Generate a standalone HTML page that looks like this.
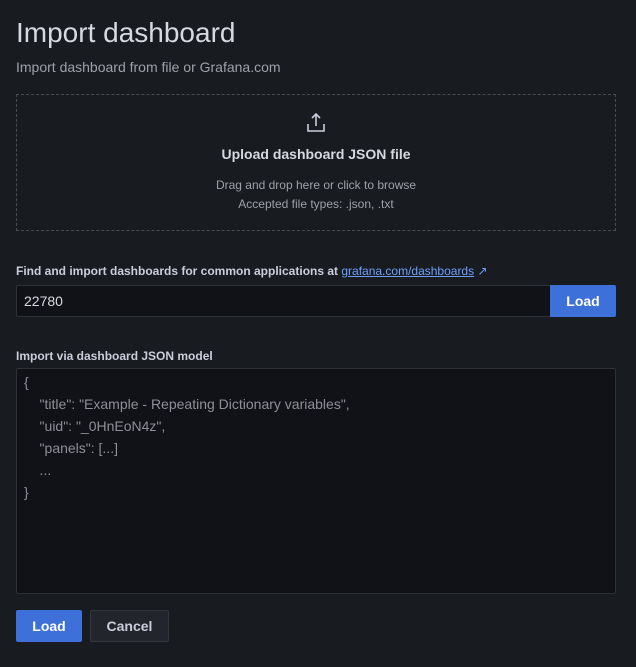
<!DOCTYPE html>
<html><head><style>
*{box-sizing:border-box;margin:0;padding:0}
body{width:636px;height:667px;background:#181b1f;font-family:"Liberation Sans",sans-serif;color:#ccccdc;position:relative;overflow:hidden}
.a{position:absolute}
</style></head><body>
<div class="a" style="left:16px;top:17px;font-size:28px;color:#d8d9e0;">Import dashboard</div>
<div class="a" style="left:16px;top:59px;font-size:14px;color:#9fa0a8;">Import dashboard from file or Grafana.com</div>
<div class="a" style="left:16px;top:94px;width:600px;height:137px;border:1px dashed #4a4c52;"></div>
<svg class="a" style="left:305px;top:112px" width="22" height="22" viewBox="0 0 22 22" fill="none" stroke="#ccccdc" stroke-width="1.6"><path d="M11 2v12M7 6l4-4 4 4M3 12v7h16v-7"/></svg>
<div class="a" style="left:0;width:632px;top:146px;text-align:center;font-size:14px;font-weight:bold;color:#d8d9e0;">Upload dashboard JSON file</div>
<div class="a" style="left:0;width:632px;top:176px;text-align:center;font-size:12px;color:#9fa0a8;line-height:19px;">Drag and drop here or click to browse<br>Accepted file types: .json, .txt</div>
<div class="a" style="left:16px;top:264px;font-size:12px;font-weight:bold;color:#ccccdc;">Find and import dashboards for common applications at <span style="color:#6e9fff;font-weight:normal;text-decoration:underline">grafana.com/dashboards</span> <span style="color:#6e9fff;font-weight:normal">↗</span></div>
<div class="a" style="left:16px;top:285px;width:535px;height:32px;background:#111217;border:1px solid #2f3137;border-radius:2px 0 0 2px;font-size:14px;padding:7px 7px;color:#d8d9e0;">22780</div>
<div class="a" style="left:550px;top:285px;width:66px;height:32px;background:#3d71d9;color:#fff;font-size:14px;font-weight:bold;text-align:center;line-height:32px;border-radius:0 2px 2px 0;">Load</div>
<div class="a" style="left:16px;top:349px;font-size:12px;font-weight:bold;">Import via dashboard JSON model</div>
<div class="a" style="left:16px;top:368px;width:600px;height:226px;background:#111217;border:1px solid #2f3137;border-radius:2px;font-size:14px;color:#8e8f96;padding:2px 7px;line-height:22px;white-space:pre;">{
    "title": "Example - Repeating Dictionary variables",
    "uid": "_0HnEoN4z",
    "panels": [...]
    ...
}</div>
<div class="a" style="left:16px;top:610px;width:66px;height:32px;background:#3d71d9;color:#fff;font-size:14px;font-weight:bold;text-align:center;line-height:32px;border-radius:2px;">Load</div>
<div class="a" style="left:90px;top:610px;width:79px;height:32px;background:#22252b;border:1px solid #33363c;color:#ccccdc;font-size:14px;font-weight:bold;text-align:center;line-height:30px;border-radius:2px;">Cancel</div>
</body></html>
